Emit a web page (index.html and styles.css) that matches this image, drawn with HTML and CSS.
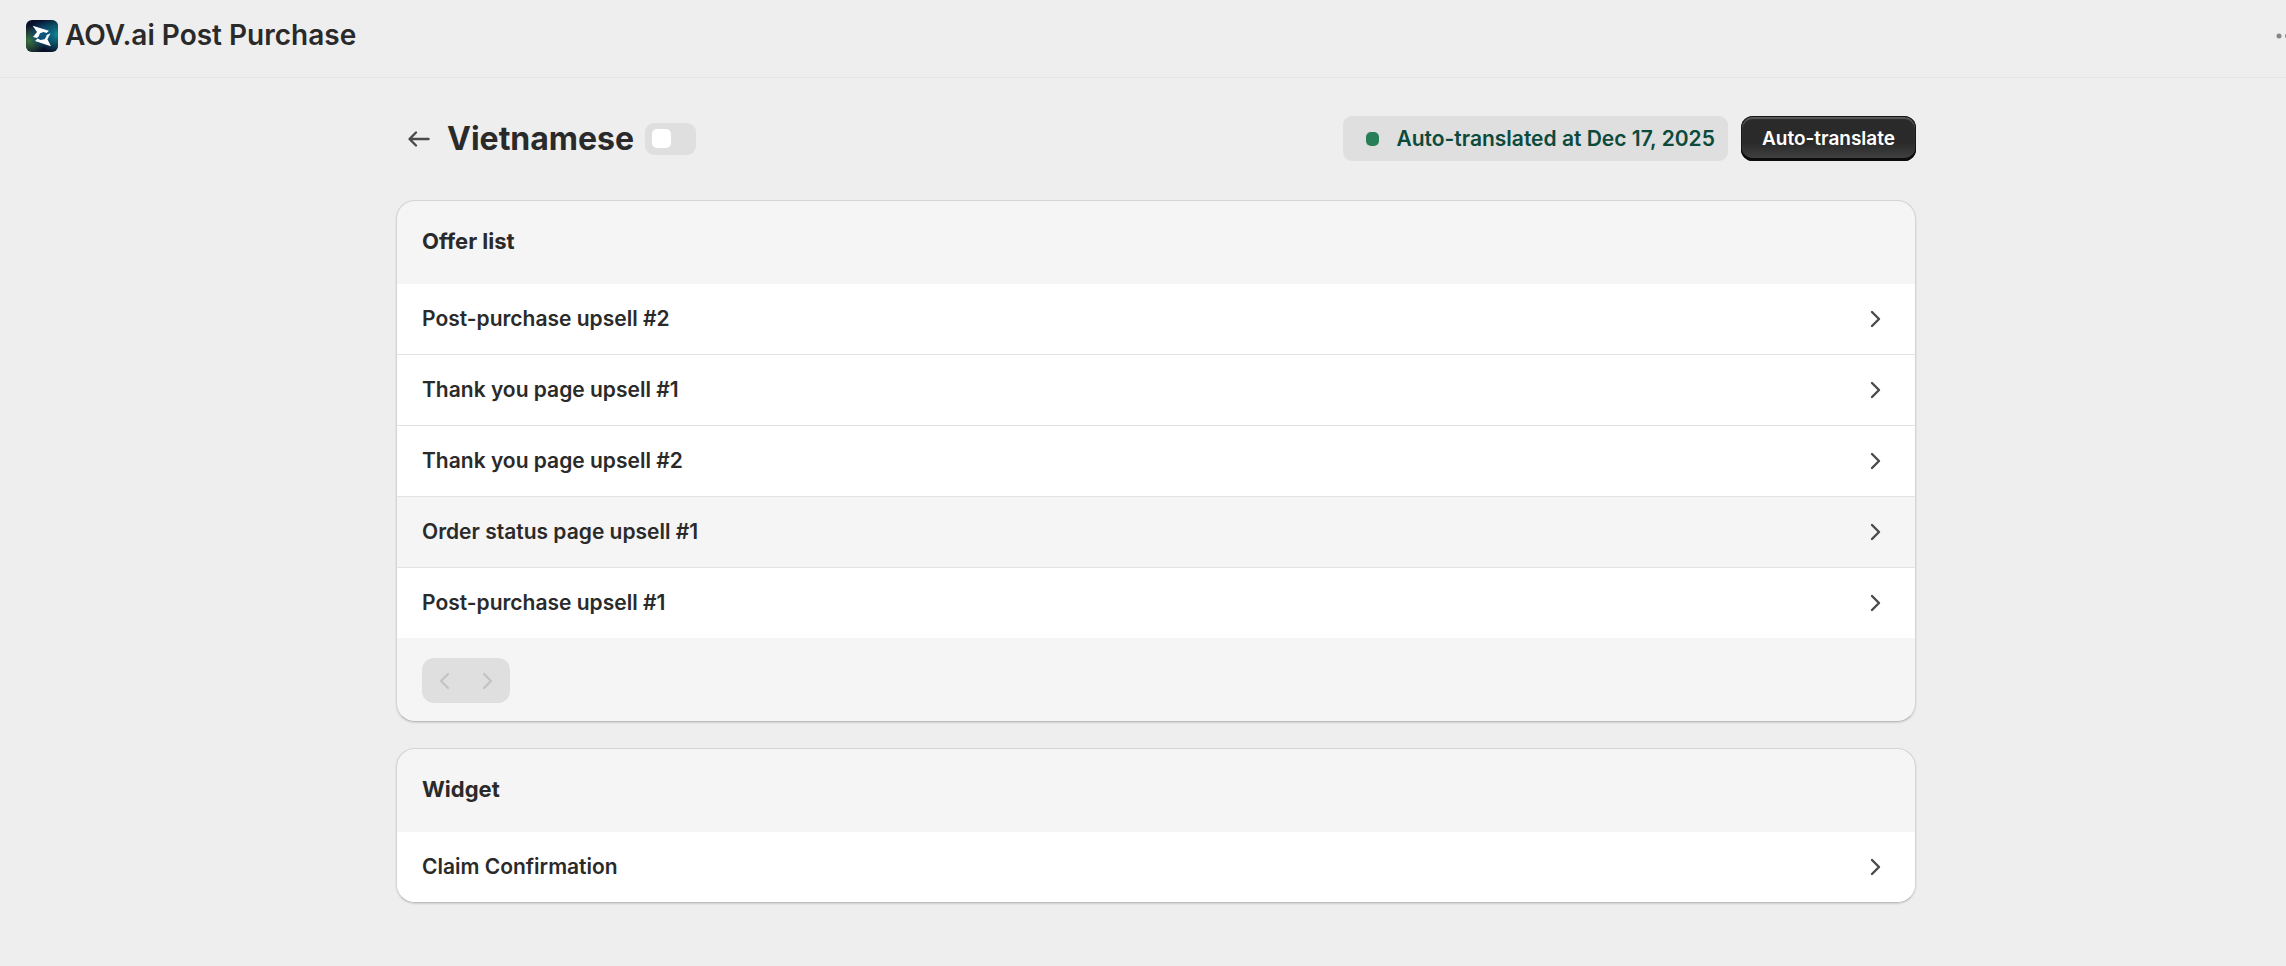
FILE: index.html
```html
<!DOCTYPE html>
<html lang="en">
  <head>
    <meta charset="UTF-8" />
    <meta name="viewport" content="width=device-width, initial-scale=1.0" />
    <title>AOV.ai Post Purchase</title>
    <link rel="stylesheet" href="styles.css">
  </head>

  <body>
    <!-- shared icons -->
    <svg class="sprite" aria-hidden="true">
      <symbol id="chevron" viewBox="0 0 32 32">
        <path d="M12 9 19 16 12 23" />
      </symbol>
    </svg>

    <header class="topbar">
      <svg class="logo" viewBox="0 0 32 32" aria-hidden="true">
        <defs>
          <radialGradient id="green" cx="0.1" cy="0.65" r="0.5">
            <stop offset="0" stop-color="#3c7440" />
            <stop offset="1" stop-color="#3c7440" stop-opacity="0" />
          </radialGradient>
          <radialGradient id="teal" cx="0.95" cy="0.45" r="0.6">
            <stop offset="0" stop-color="#0f8796" />
            <stop offset="1" stop-color="#0f8796" stop-opacity="0" />
          </radialGradient>
          <radialGradient id="blue" cx="0.5" cy="0.45" r="0.45">
            <stop offset="0" stop-color="#0c5a8c" />
            <stop offset="1" stop-color="#0c5a8c" stop-opacity="0" />
          </radialGradient>
        </defs>
        <rect width="32" height="32" rx="6" fill="#08102a" />
        <rect width="32" height="32" rx="6" fill="url(#green)" />
        <rect width="32" height="32" rx="6" fill="url(#teal)" />
        <rect width="32" height="32" rx="6" fill="url(#blue)" />
        <path
          fill="#fff"
          d="M6.7 5.7 23 10.8 20.5 13 17.5 12 14 13.2 12.6 16.5 11 18 7 17 11 12Z"
        />
        <path
          fill="#fff"
          d="M24.6 13.2 21.4 19.3 25 26.2 9 21 11.6 18.6 14.5 20 18.5 19.2 20.4 16.5 20.6 15Z"
        />
      </svg>
      <span class="app-name">AOV.ai Post Purchase</span>
      <button class="more" type="button" aria-label="More actions">
        <svg viewBox="0 0 24 24" aria-hidden="true">
          <circle cx="3" cy="12" r="2.5" />
          <circle cx="11.5" cy="12" r="2.5" />
          <circle cx="20" cy="12" r="2.5" />
        </svg>
      </button>
    </header>

    <main class="page">
      <div class="page-header">
        <a class="back" href="#" aria-label="Back">
          <svg viewBox="0 0 32 32" aria-hidden="true">
            <path d="M25.5 16H7M13 9.5 6.5 16 13 22.5" />
          </svg>
        </a>
        <h1 class="page-title">Vietnamese</h1>
        <input class="toggle" type="checkbox" aria-label="Publish Vietnamese" />
        <div class="actions">
          <div class="status"><span class="dot"></span>Auto-translated at Dec 17, 2025</div>
          <button class="primary" type="button">Auto-translate</button>
        </div>
      </div>

      <section class="card">
        <h2 class="card-title">Offer list</h2>
        <ul class="list">
          <li><a class="row" href="#">Post-purchase upsell #2<svg class="icon"><use href="#chevron" /></svg></a></li>
          <li><a class="row" href="#">Thank you page upsell #1<svg class="icon"><use href="#chevron" /></svg></a></li>
          <li><a class="row" href="#">Thank you page upsell #2<svg class="icon"><use href="#chevron" /></svg></a></li>
          <li><a class="row active" href="#">Order status page upsell #1<svg class="icon"><use href="#chevron" /></svg></a></li>
          <li><a class="row" href="#">Post-purchase upsell #1<svg class="icon"><use href="#chevron" /></svg></a></li>
        </ul>
        <div class="card-footer">
          <div class="pager">
            <button type="button" aria-label="Previous" disabled><svg class="icon prev"><use href="#chevron" /></svg></button>
            <button type="button" aria-label="Next" disabled><svg class="icon"><use href="#chevron" /></svg></button>
          </div>
        </div>
      </section>

      <section class="card">
        <h2 class="card-title">Widget</h2>
        <ul class="list">
          <li><a class="row" href="#">Claim Confirmation<svg class="icon"><use href="#chevron" /></svg></a></li>
        </ul>
      </section>
    </main>
  </body>
</html>
```
FILE: styles.css
```css
* {
  box-sizing: border-box;
}

body {
  margin: 0;
  background-color: #eee;
  color: #2a2a2a;
  font-family: Inter, "Liberation Sans", sans-serif;
  font-size: 21px;
  font-weight: 600;
  line-height: 32px;
}

button {
  font: inherit;
  border: none;
  padding: 0;
  cursor: pointer;
}

.sprite {
  display: none;
}

.topbar {
  display: flex;
  align-items: center;
  gap: 7px;
  height: 78px;
  padding: 0 0 6px 26px;
  border-bottom: 1px solid #e5e5e5;
  overflow: hidden;
}

.logo {
  width: 32px;
  height: 32px;
}

.app-name {
  padding-bottom: 2px;
  font-size: 28px;
}

/* the menu runs past the edge of the bar */
.more {
  flex: none;
  width: 24px;
  height: 24px;
  margin-left: auto;
  margin-right: -14px;
  background: none;
}

.more svg {
  display: block;
  fill: #858585;
}

.page {
  max-width: 1546px;
  margin: 0 auto;
  padding: 38px 0 38px 26px;
}

.page-header {
  display: flex;
  align-items: center;
  margin-bottom: 39px;
}

.back {
  width: 32px;
  height: 32px;
  margin: 0 12px 0 7px;
}

.back svg,
.icon {
  display: block;
  width: 32px;
  height: 32px;
  fill: none;
  stroke: #4a4a4a;
  stroke-width: 2.4;
  stroke-linecap: round;
  stroke-linejoin: round;
}

.page-title {
  margin: 0 11px 0 0;
  font-size: 32px;
  font-weight: 700;
}

.toggle {
  appearance: none;
  width: 51px;
  height: 32px;
  margin: 0;
  padding: 6px 7px;
  border-radius: 9px;
  background-color: #dfdfdf;
}

.toggle::before {
  content: "";
  display: block;
  width: 19px;
  height: 19px;
  border-radius: 5px;
  background-color: #fff;
}

.toggle:checked::before {
  margin-left: auto;
}

.actions {
  display: flex;
  gap: 13px;
  margin-left: auto;
}

.status {
  display: flex;
  align-items: center;
  height: 45px;
  padding: 0 13px 0 23px;
  border-radius: 9px;
  background-color: #dfdfdf;
  color: #0c4a3c;
}

.dot {
  width: 13px;
  height: 14px;
  margin-right: 17px;
  border-radius: 5px;
  background-color: #267f56;
}

.primary {
  height: 45px;
  padding: 0 21px;
  border-radius: 12px;
  background: linear-gradient(#2a2a2a 60%, #444);
  box-shadow: inset 0 -3px 0 #0c0c0c, inset 0 0 0 1px #161616, inset 0 2px 1px 1px #5a5a5a;
  color: #fff;
  font-size: 19px;
}

.card {
  margin-bottom: 26px;
  border: 1px solid #d4d4d4;
  border-bottom-color: #bcbcbc;
  border-radius: 19px;
  background-color: #f5f5f5;
  box-shadow: 0 1px 2px #0002;
  overflow: hidden;
}

.card-title {
  margin: 0;
  padding: 24px 25px 27px;
  font-size: 22px;
  font-weight: 700;
}

.list {
  list-style: none;
  margin: 0;
  padding: 0;
}

.list li + li {
  border-top: 1px solid #e3e3e3;
}

.row {
  display: flex;
  align-items: center;
  justify-content: space-between;
  height: 70px;
  padding: 0 23px 0 25px;
  background-color: #fff;
  color: inherit;
  text-decoration: none;
}

.row.active {
  background-color: #f5f5f5;
}

.card-footer {
  padding: 20px 25px 18px;
}

.pager {
  display: inline-flex;
  vertical-align: top;
  border-radius: 12px;
  background-color: #dfdfdf;
}

.pager button {
  width: 44px;
  height: 45px;
  padding: 0 6px;
  background: none;
}

.pager .icon {
  stroke: #c4c4c4;
}

.prev {
  transform: rotate(180deg);
}
```
